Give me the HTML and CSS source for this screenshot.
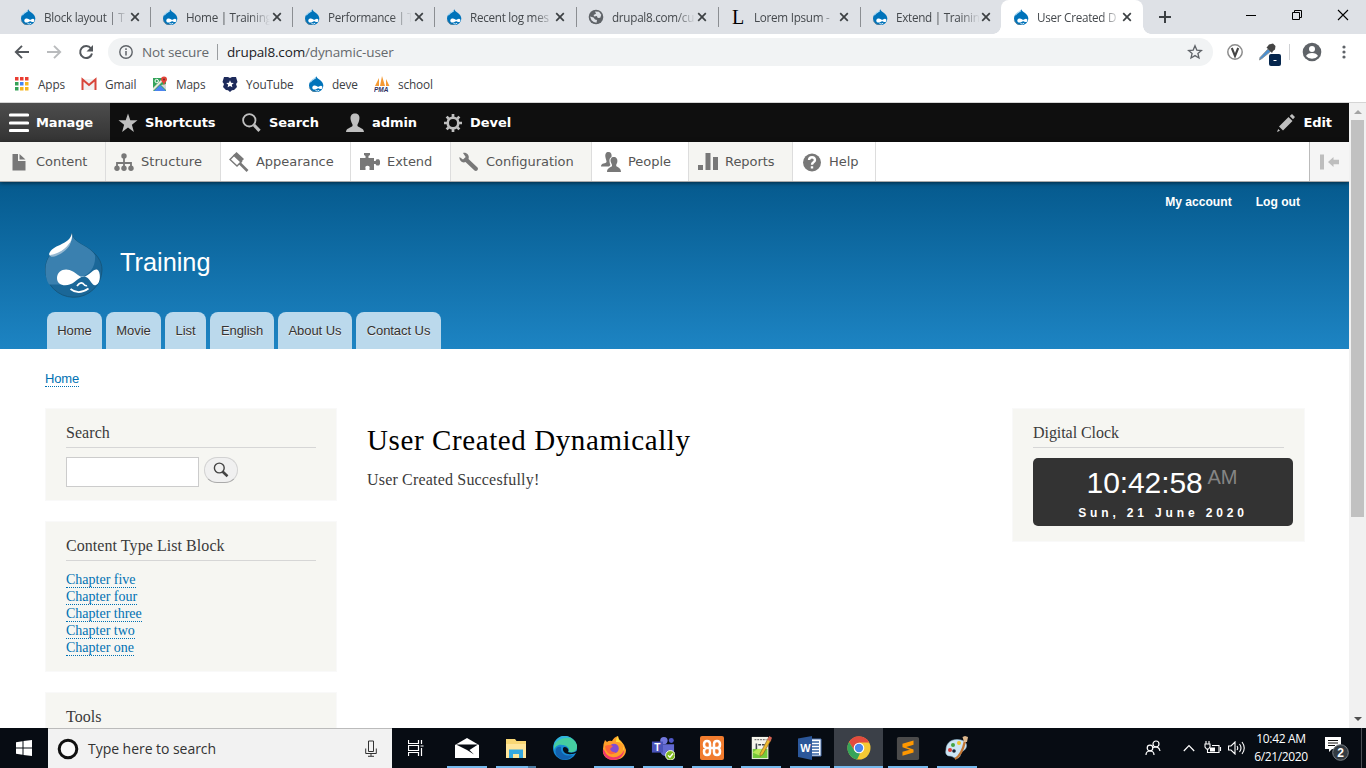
FILE: index.html
```html
<!DOCTYPE html>
<html lang="en">
<head>
<meta charset="utf-8">
<title>User Created Dynamically | Training</title>
<link rel="stylesheet" href="styles.css">
</head>
<body>
<svg class="defs" aria-hidden="true">
  <symbol id="drop" viewBox="0 0 16 16">
    <path d="M8.2.2C9 2 10.600 2.900 12 3.900c2 1.400 3.300 3.200 3.300 5.700a7 6.400 0 0 1-14.300.2C1 6.900 2.500 5 4.400 3.800 6 2.900 7.600 2 8.200.2z" fill="#0073ba"/>
    <path d="M7.700 1.600C6.500 3 3.500 3.700 2.300 6.300" stroke="#b4dcf3" stroke-width="1.300" fill="none"/>
    <path d="M4.300 11.200c.4-2 3-2.300 4.700-.9.900.7 1.400.7 2.400 0 2-1.400 3.600.2 2.800 2-.8 1.400-2.200.7-3.200.1-.9-.5-1.500-.2-2.500.5-1.900 1.300-4.500.6-4.200-1.700z" fill="#fff"/>
    <path d="M7.500 14.600q2 1 3.700-.3" stroke="#fff" stroke-width=".9" fill="none"/>
    <path d="M1.300 11.500Q3 15.800 8 15.900" stroke="#6c8490" stroke-width=".8" fill="none"/>
  </symbol>
  <symbol id="close" viewBox="0 0 10 10"><path d="M1.200 1.200l7.600 7.600M8.800 1.200L1.200 8.800" stroke="#3c4043" stroke-width="1.700"/></symbol>
</svg>

<div class="tabstrip">
  <div class="tab"><svg class="fav"><use href="#drop"/></svg><span class="t">Block layout | T</span><svg class="x"><use href="#close"/></svg></div>
  <div class="tab"><svg class="fav"><use href="#drop"/></svg><span class="t">Home | Training</span><svg class="x"><use href="#close"/></svg></div>
  <div class="tab"><svg class="fav"><use href="#drop"/></svg><span class="t">Performance | T</span><svg class="x"><use href="#close"/></svg></div>
  <div class="tab"><svg class="fav"><use href="#drop"/></svg><span class="t">Recent log mes</span><svg class="x"><use href="#close"/></svg></div>
  <div class="tab"><svg class="fav" viewBox="0 0 16 16"><circle cx="8" cy="8" r="7.300" fill="#5f6368"/><path d="M2 7.500l3.500 1 1.500 2 2 .5-.5 2.800q-3-.3-5-2.600zM7 2.500l4 .2 2.300 3-1 3-2.500.2-1-1.900-2.500.4L5.500 6 8 4.700z" fill="#dee1e6"/></svg><span class="t">drupal8.com/cu</span><svg class="x"><use href="#close"/></svg></div>
  <div class="tab"><span class="fav letter">L</span><span class="t">Lorem Ipsum -</span><svg class="x"><use href="#close"/></svg></div>
  <div class="tab last"><svg class="fav"><use href="#drop"/></svg><span class="t">Extend | Trainin</span><svg class="x"><use href="#close"/></svg></div>
  <div class="tab active"><svg class="fav"><use href="#drop"/></svg><span class="t">User Created D</span><svg class="x"><use href="#close"/></svg></div>
  <svg class="plus" viewBox="0 0 12 12"><path d="M6 0v12M0 6h12" stroke="#3c4043" stroke-width="2"/></svg>
  <div class="winbtns">
    <svg viewBox="0 0 12 12"><path d="M1 6.500h10" stroke="#000"/></svg>
    <svg viewBox="0 0 12 12"><path d="M1.500 3.500h7v7h-7zM3.500 3.500v-2h7v7h-2" stroke="#000" fill="none"/></svg>
    <svg viewBox="0 0 12 12"><path d="M1 1l10 10M11 1L1 11" stroke="#000" stroke-width="1.100"/></svg>
  </div>
</div>

<div class="addressbar">
  <svg class="nav" viewBox="0 0 16 16"><path d="M15 8H2M8 1.800L1.800 8 8 14.200" stroke="#54585d" stroke-width="1.900" fill="none"/></svg>
  <svg class="nav" viewBox="0 0 16 16"><path d="M1 8h13M8 1.800L14.200 8 8 14.200" stroke="#b9bbbd" stroke-width="1.900" fill="none"/></svg>
  <svg class="nav" viewBox="0 0 16 16"><path d="M13 4.500A6 6 0 1 0 14 9.500" stroke="#54585d" stroke-width="2" fill="none"/><path d="M15 1v6.500H8.500z" fill="#54585d"/></svg>
  <div class="omnibox">
    <svg class="info" viewBox="0 0 14 14"><circle cx="7" cy="7" r="6.200" stroke="#5f6368" stroke-width="1.400" fill="none"/><path d="M7 6v4.500M7 3.300v1.600" stroke="#5f6368" stroke-width="1.500"/></svg>
    <span class="insecure">Not secure</span><i class="bar"></i><span class="url"><b>drupal8.com</b>/dynamic-user</span>
    <svg class="star" viewBox="0 0 16 16"><path d="M8 1.800l1.800 4.300 4.600.4-3.500 3 1.100 4.500L8 11.600 4 14l1.100-4.500-3.500-3 4.600-.4z" stroke="#5f6368" stroke-width="1.300" fill="none"/></svg>
  </div>
  <svg class="vicon" viewBox="0 0 18 18"><circle cx="9" cy="9" r="7.200" stroke="#8c8c8c" stroke-width="1.500" fill="#fff"/><path d="M5.800 5L9 13l3.200-8" stroke="#444" stroke-width="2.100" fill="none"/></svg>
  <svg class="dropper" viewBox="0 0 24 24"><path d="M2 14.500L10 6l2.500 2.500-8.500 7L1.500 17z" fill="#4a90d2" stroke="#888" stroke-width=".8"/><path d="M8.500 4.500l5.500 5.500 1-2 2-1.500L17.500 3 15 .5 11 1.500 9.500 3.500z" fill="#444"/><rect x="11" y="11" width="12" height="12" rx="2" fill="#05264d"/><path d="M15.500 17.500h3" stroke="#fff"/></svg>
  <i class="vsep"></i>
  <svg class="profile" viewBox="0 0 20 20"><circle cx="10" cy="10" r="9.300" fill="#5f6368"/><circle cx="10" cy="7" r="3" fill="#fff"/><path d="M4 14q1.500-3 6-3t6 3q-2.200 2.800-6 2.800T4 14z" fill="#fff"/></svg>
  <svg class="dots" viewBox="0 0 4 14"><g fill="#5f6368"><circle cx="2" cy="2" r="1.600"/><circle cx="2" cy="7" r="1.600"/><circle cx="2" cy="12" r="1.600"/></g></svg>
</div>

<div class="bookmarks">
  <span class="bm w1"><svg viewBox="0 0 16 16"><path d="M1 1h3.500v3.500H1zM6 1h3.500v3.500H6zM11 1h3.500v3.500H11z" fill="#ea3d31"/><path d="M1 6h3.500v3.500H1z" fill="#34a157"/><path d="M6 6h3.500v3.500H6z" fill="#4285f4"/><path d="M11 6h3.500v3.500H11zM6 11h3.500v3.500H6zM11 11h3.500v3.500H11z" fill="#f6b51e"/><path d="M1 11h3.500v3.500H1z" fill="#34a157"/></svg>Apps</span>
  <span class="bm w2"><svg viewBox="0 0 16 16"><path d="M1 3h14v11H1z" fill="#f1f1f1"/><path d="M1.500 14V3.500L8 9l6.500-5.500V14" stroke="#d8453a" stroke-width="2" fill="none"/></svg>Gmail</span>
  <span class="bm w3"><svg viewBox="0 0 16 16"><path d="M1 2h13v13H1z" fill="#34a35a"/><path d="M2 15l6-6 6 6z" fill="#4b83ef"/><path d="M1 15V12L11 2h3z" fill="#e9e5da"/><path d="M9 9l5 5V8z" fill="#d3d5d8"/><circle cx="4.700" cy="5" r="1.700" stroke="#fff" stroke-width="1" fill="none"/><path d="M12 .5a3 3 0 0 1 3 3c0 2-2.500 3-3 6-.5-3-3-4-3-6a3 3 0 0 1 3-3z" fill="#e04438"/><circle cx="12" cy="3.500" r="1" fill="#7b2a24"/></svg>Maps</span>
  <span class="bm w4"><svg viewBox="0 0 16 16"><path d="M2 1h4l2 1 2-1h4l1.500 5L14 8l1 3-3 3-2 .2L8 16l-2-1.800L4 14l-3-3 1-3L.5 6z" fill="#1d2a5b"/><path d="M8 4.200l1.100 2.500 2.700.2-2 1.800.6 2.600L8 9.900l-2.400 1.400.6-2.600-2-1.800 2.700-.2z" fill="#fff"/></svg>YouTube</span>
  <span class="bm w5"><svg viewBox="0 0 16 16"><use href="#drop"/></svg>deve</span>
  <span class="bm"><svg viewBox="0 0 16 16"><path d="M1 10L5 2v8zM6 10L8 0l3 10zM12 10V3l3.500 7z" fill="#f59a33"/><text x="0" y="15.500" class="pma">PMA</text></svg>school</span>
</div>

<div class="viewport">
 <div class="page">
  <div class="toolbar">
    <span class="ti manage"><svg viewBox="0 0 20 20"><path d="M1.500 2h17M1.500 10h17M1.500 17.500h17" stroke="#fff" stroke-width="3.200" stroke-linecap="round"/></svg>Manage</span>
    <span class="ti sc"><svg viewBox="0 0 20 20"><path d="M10 .5l2.300 6.700 7.200.1-5.600 4.400 2 7.300L10 14.600 4.100 19l2-7.300L.5 7.300l7.200-.1z" fill="#bfbfbf"/></svg>Shortcuts</span>
    <span class="ti se"><svg viewBox="0 0 20 20"><circle cx="8.300" cy="7.300" r="6.200" stroke="#bfbfbf" stroke-width="1.800" fill="none"/><path d="M13 12l5.500 5.800" stroke="#bfbfbf" stroke-width="3.200"/></svg>Search</span>
    <span class="ti ad"><svg viewBox="0 0 20 20"><path d="M6 8C4.500 3 6.500.5 10 .5s5.500 2.500 4 7.500c-.5 2-2 3.500-1.500 5 1 1.700 6.500 2 6.500 6H1c0-4 5.500-4.300 6.500-6C8 11.500 6.500 10 6 8z" fill="#bfbfbf"/></svg>admin</span>
    <span class="ti"><svg viewBox="0 0 20 20"><circle cx="10" cy="10" r="5.300" stroke="#bfbfbf" stroke-width="2.600" fill="none"/><path d="M10 1v3M10 16v3M1 10h3M16 10h3M3.600 3.600l2.200 2.200M14.200 14.200l2.200 2.200M3.600 16.400l2.200-2.200M14.200 5.800l2.200-2.200" stroke="#bfbfbf" stroke-width="2.700"/></svg>Devel</span>
    <span class="ti edit"><svg viewBox="0 0 20 20"><path d="M1 19l1.200-3 1.800 1.800zM3 13.500l9.500-9.500 4 4L7 17.500zM13.700 3L16 1l3 3-2 2.300z" fill="#bfbfbf"/></svg>Edit</span>
  </div>
  <div class="tray">
    <span class="tr t-content g"><svg viewBox="0 0 20 20"><path d="M3.500 2H9v7h7.500v9.500h-13zM10.500 2l6 5.500h-6z" fill="#787878"/></svg>Content</span>
    <span class="tr t-structure g"><svg viewBox="0 0 20 20"><path d="M3 15v-4h14v4M10 4v11" stroke="#787878" stroke-width="1.800" fill="none"/><circle cx="10" cy="4" r="2.700" fill="#787878"/><g fill="#787878"><circle cx="3" cy="16.300" r="2.700"/><circle cx="10" cy="16.300" r="2.700"/><circle cx="17" cy="16.300" r="2.700"/></g></svg>Structure</span>
    <span class="tr t-appearance"><svg viewBox="0 0 20 20"><path d="M1 7.500L5.500 3l7 6.500L8 14z" fill="none" stroke="#787878" stroke-width="1.400"/><path d="M4 3.500L7.500 0l7.500 7-3.500 3.500z" fill="#787878"/><path d="M10.500 11l8 8" stroke="#787878" stroke-width="2.600"/></svg>Appearance</span>
    <span class="tr t-extend"><svg viewBox="0 0 20 20"><path d="M0 6h5.500V4L4 3V1h6v2L8.500 4v2H14v3h1.500l1-1.700H19L20 9v3l-1 1.500h-2.500l-1-1.500H14v6H9.500v-1.800q.8-2.200-2-2.400-2.800.2-2 2.400V18H0z" fill="#787878"/></svg>Extend</span>
    <span class="tr t-config g"><svg viewBox="0 0 20 20"><path d="M4 1c3-1 7 2 5.500 6l9 8.500c1.500 2-1 4.500-3 3L6.500 10C3.500 11.500 0 8.500.5 5L4 7.500 6.700 5z" fill="#787878"/></svg>Configuration</span>
    <span class="tr t-people"><svg viewBox="0 0 20 20"><path d="M4.500 5.500C3.800 2 5 0 7.500 0S11 2 10.500 5q-2.500 1-2 4.500.3 2.500 1 3.500L8 14.500H0c0-4 5-2.500 5.500-4.500.2-1.500-.7-2.500-1-4.500z" fill="#787878"/><path d="M9.800 10C9 7 10.300 5 12.800 5s4 2 3.500 5c-.3 1.700-1.500 2.500-1 4 .7 1.300 4.700 1.500 4.700 6H6c0-4.500 4.500-4.700 5-6 .4-1.500-.9-2.500-1.200-4z" fill="#787878"/></svg>People</span>
    <span class="tr t-reports g"><svg viewBox="0 0 20 20"><path d="M0 13h5v5H0zM7.500 1h5v17h-5zM15 5h5v13h-5z" fill="#787878"/></svg>Reports</span>
    <span class="tr t-help"><svg viewBox="0 0 20 20"><circle cx="10" cy="10.500" r="9" fill="#787878"/><path d="M7 8q.2-2.800 3-2.800T13 8q0 1.300-1.500 2.200T10 12.700M10 14.200v2.200" stroke="#fff" stroke-width="2.400" fill="none"/></svg>Help</span>
    <span class="toggle"><svg viewBox="0 0 20 16"><path d="M0 .5h4v15H0zM8 8l5.500-5v2.800H19v4.400h-5.500V13z" fill="#bebebe"/></svg></span>
  </div>
  <header class="header">
    <div class="usermenu"><span>My account</span><span>Log out</span></div>
    <div class="brand">
      <svg class="logo" viewBox="0 0 58 66">
        <path d="M27 .5C28 7 34 10 42 14.500 52 21 57 28 57 37a28 27.500 0 0 1-56.500-1C.5 27 6 19 14 14.500 21 10.500 26 7 27 .5z" fill="#1a6798" stroke="#15587f"/>
        <path d="M27 1c1 6 7 9 15 13.500 4 2.500 7 5.500 8 8 1 11-5 19-14 22-8 3-9 9-17 7H4C1 47 .5 42 .5 36 .5 27 6 19 14 14.500 21 10.500 26 7 27 1z" fill="#3a80af"/>
        <path d="M27 0c1 9-4 15-13 20-5 3-9 5-10 1 2-5 6-7 11-9 6-3 11-6 12-12z" fill="#fff"/><path d="M26 8c-1 7-8 12-15 15-3 1.500-6 .5-6-1 8-1 16-6 21-14z" fill="#94b8d2"/>
        <path d="M12 45c0-8 9-11 16-6.500 6 4 8 7 13 4.500 5-2.500 7-7 11-6.500 4 1.500 4 14-1 15.500-4 1.500-5-5-9-7.500s-7-.3-12 4c-7 6-18 5-18-3.500z" fill="#fff"/>
        <path d="M32 53q3-4.500 6-2.500 2.500 3 4 2M25.500 56q8 6.500 18-.5" stroke="#fff" stroke-width="1.700" fill="none"/>
      </svg>
      <span class="sitename">Training</span>
    </div>
    <nav class="menu"><span class="m1">Home</span><span class="m1">Movie</span><span class="m2">List</span><span class="m3">English</span><span class="m4">About Us</span><span class="m5">Contact Us</span></nav>
  </header>
  <div class="crumb"><a>Home</a></div>
  <div class="columns">
    <aside class="left">
      <section class="block s1"><h2>Search</h2><div class="search"><input type="text"><button><svg viewBox="0 0 16 16"><circle cx="6.300" cy="6" r="4.900" stroke="#444" stroke-width="1.400" fill="none"/><path d="M9.500 9.500l5 4.800" stroke="#444" stroke-width="2.600"/></svg></button></div></section>
      <section class="block s2"><h2>Content Type List Block</h2><ul><li><a>Chapter five</a></li><li><a>Chapter four</a></li><li><a>Chapter three</a></li><li><a>Chapter two</a></li><li><a>Chapter one</a></li></ul></section>
      <section class="block s3"><h2>Tools</h2></section>
    </aside>
    <main><h1>User Created Dynamically</h1><p>User Created Succesfully!</p></main>
    <aside class="right"><section class="block s4"><h2>Digital Clock</h2><div class="clock"><div class="time">10:42:58<span>AM</span></div><div class="date">Sun, 21 June 2020</div></div></section></aside>
  </div>
 </div>
 <div class="scrollbar"><i class="up"></i><i class="thumb"></i><i class="down"></i></div>
</div>

<div class="taskbar">
  <span class="start"><svg viewBox="0 0 16 16"><path d="M0 2.300L6.500 1.300v6.200H0zM7.500 1.100L16 0v7.500H7.500zM0 8.500h6.500v6.200L0 13.700zM7.500 8.500H16V16l-8.500-1.100z" fill="#fff"/></svg></span>
  <div class="tsearch"><svg class="ring" viewBox="0 0 22 22"><circle cx="11" cy="11" r="8.800" stroke="#111" stroke-width="3" fill="#fafafa"/></svg><span>Type here to search</span><svg class="mic" viewBox="0 0 12 17"><path d="M3.500 1h5v10.500h-5zM.7 8.500v5h10.600v-5M6 13.500V16M3 16.300h6" stroke="#333" fill="none"/></svg></div>
  <span class="tview"><svg viewBox="0 0 16 16"><path d="M.5 0v3.500h10V0M.5 16v-3.500h10V16M.5 5.500h10v5H.5zM13.500 0v4M13.500 8v8M12.500 6h3" stroke="#fff" stroke-width="1.200" fill="none"/></svg></span>
  <span class="app on"><svg viewBox="0 0 24 24"><path d="M0 9L12 2l12 7v13H0z" fill="#fff"/><path d="M1 8.500h22L14.500 14l4.500 4.500L12 14z" fill="#070c13"/></svg></span>
  <span class="app on ex"><svg viewBox="0 0 24 24"><path d="M2 3h9l1.500 2H22v17H2z" fill="#f8d775"/><path d="M2 8h20v14H2z" fill="#ffe69b"/><path d="M5 22v-8.500h14V22h-4v-4H9v4z" fill="#34a8e0"/></svg></span>
  <span class="app"><svg viewBox="0 0 24 24"><circle cx="12" cy="12" r="12" fill="#168bd5"/><path d="M1 9C3-1 20-3 24 9c1 7-5 8-9 7 3-3-1-7-6-7-4-1-7 2-8 5z" fill="#45cda0"/><path d="M1 9C3-1 13-2 18 2 10 1 4 4 1 9z" fill="#2fb5dc"/><path d="M8 11c-1 7 5 10 12 8-4 6-12 6-16 1-3-5-1-10 4-9z" fill="#1261ae"/><path d="M10 12c-1 5 5 8 13 5l1 1v-3q-5 3-9 1c2-3-3-7-5-4z" fill="#07101a"/></svg></span>
  <span class="app on"><svg viewBox="0 0 24 24"><path d="M3 4l2 2q2-2 5-1 2-4 6-5 0 3 3 5 4 4 5 9c0 6-5 10-12 10S0 20 1 13q0-5 2-9z" fill="#ff9f29"/><path d="M1 13c3 2 2 7 9 8 5 1 10-2 12-7 0 6-5 10-11 10S0 19 1 13z" fill="#f0366d"/><circle cx="12" cy="12.500" r="4.800" fill="#824ed1"/><path d="M3 10q4-2 8 0l-3 3q2 4 6 3-4 4-8 1-3-3-3-7z" fill="#ff663b"/><path d="M16 0q0 4 4 7 3 5 1 8 2-10-7-9 0-4 2-6z" fill="#ffdf3e"/></svg></span>
  <span class="app on"><svg viewBox="0 0 24 26"><circle cx="13" cy="5" r="4" fill="#7177dc"/><circle cx="21" cy="5" r="2.700" fill="#5059c9"/><path d="M9 9h15v8q-2 5-8 5-5 0-7-5z" fill="#6269d0"/><path d="M0 6h12v12H0z" fill="#4953b8"/><text x="2.600" y="16" class="glyph">T</text><circle cx="20" cy="21" r="5.200" fill="#7fba20" stroke="#fff"/><path d="M17.500 21l2 2 3.300-4" stroke="#fff" stroke-width="1.500" fill="none"/></svg></span>
  <span class="app on"><svg viewBox="0 0 24 24"><rect width="24" height="24" rx="2" fill="#f17c2e"/><path d="M10 12V8q0-3-3-3T4 8.500 7 12h10q3 0 3-3.500T17 5t-3 3v8q0 3 3 3t3-3.500-3-3.500M7 12q-3 0-3 3.500T7 19t3-3v-4" stroke="#fff" stroke-width="2.500" fill="none"/></svg></span>
  <span class="app on"><svg viewBox="0 0 24 26"><path d="M2 1h18v24H2z" fill="#f5f5ec"/><path d="M3 14h16v10H3z" fill="#74c93b"/><path d="M3 18l5-4h8l-4 8z" fill="#b9e957"/><path d="M5 4h13" stroke="#777" stroke-width="1.300" stroke-dasharray="2 1"/><path d="M7 8v6M9 9.500h3M13 9.500h3" stroke="#424950" stroke-width="1.700"/><path d="M11 19l9-17 3 2-9 16-3 2z" fill="#edba2e" stroke="#806126" stroke-width=".7"/><path d="M19 4l2-4 3 2-2 4z" fill="#d66456"/></svg></span>
  <span class="app on"><svg viewBox="0 0 24 24"><path d="M13 3h10v17H13z" fill="#fff" stroke="#4b70af"/><path d="M14 6h7M14 9h7M14 12h7M14 15h7M14 18h7" stroke="#3865a5" stroke-width="1.300"/><path d="M0 2.500L14 0v24L0 21z" fill="#2b579a"/><text x="2.200" y="16" class="glyph">W</text></svg></span>
  <span class="app on chrome"><svg viewBox="0 0 24 24"><circle cx="12" cy="12" r="11.500" fill="#f5c934"/><path d="M2 6A11.500 11.500 0 0 1 22.200 6.500H12L7 14z" fill="#e24b3e"/><path d="M2 6l6 9.500 5 2L10 23.400A11.500 11.500 0 0 1 2 6z" fill="#36a45a"/><circle cx="12" cy="12" r="5.300" fill="#fff"/><circle cx="12" cy="12" r="4.200" fill="#4a86ed"/></svg></span>
  <span class="app on"><svg viewBox="0 0 24 26"><rect y="1" width="24" height="25" rx="2" fill="#4b4b4b"/><path d="M6 8.500L18 5v4.500l-8 2.500 8 2.500V18L6 21.500V17l8-2.200-8-2.500z" fill="#ff9800"/></svg></span>
  <span class="app on"><svg viewBox="0 0 24 24"><path d="M1 14C1 6 8 2 16 4c8 2 6 9 2 11-4 1-1 5-5 7-4 1-5-2-8-2s-5-2-4-6z" fill="#cde6f4" stroke="#91b7ce" stroke-width=".6"/><circle cx="5" cy="14" r="2" fill="#da3d36"/><circle cx="8" cy="9" r="2" fill="#45a544"/><circle cx="14" cy="7" r="2" fill="#eec52f"/><circle cx="9" cy="15" r="1.800" fill="#142233"/><path d="M10 23q7-4 10-18" stroke="#c17634" stroke-width="2.300" fill="none"/><path d="M17.500 1l2.500-1 3 1-1 5h-3z" fill="#dfb88d"/></svg></span>
  <div class="systray">
    <svg class="people" viewBox="0 0 16 16"><g stroke="#fff" stroke-width="1.200" fill="none"><circle cx="11" cy="4" r="3"/><circle cx="5" cy="8" r="2.800"/><path d="M1 15q0-4 4-4t4 4M8 7.500q6-2 7 3.500"/></g></svg>
    <svg class="chev" viewBox="0 0 12 8"><path d="M.8 7L6 1.500 11.200 7" stroke="#fff" stroke-width="1.200" fill="none"/></svg>
    <svg class="batt" viewBox="0 0 18 14"><path d="M1 3h5v3l-1.500 2h-2L1 6zM2 0v3M5 0v3M3.500 8v3.500H6M8 4.500h7v7H6M16.500 6v4" stroke="#fff" stroke-width="1.100" fill="none"/><path d="M6 6.500h5v4H6z" fill="#fff"/></svg>
    <svg class="vol" viewBox="0 0 18 14"><path d="M.5 5H3l4-4v12L3 9H.5zM9 5q1.500 2 0 4M11.500 3q3 4 0 8M14 1q4.500 6 0 12" stroke="#fff" stroke-width="1.100" fill="none"/></svg>
    <div class="when"><span>10:42 AM</span><span>6/21/2020</span></div>
    <svg class="note" viewBox="0 0 25 25"><path d="M0 0h16v12H7l-3 3v-3H0z" fill="#fff"/><path d="M3 3.500h10M3 6h10M3 8.500h7" stroke="#111"/><circle cx="15.500" cy="15.500" r="7.800" fill="#333b42" stroke="#7b8187"/><text x="12.200" y="20" class="badge">2</text></svg>
    <i class="desk"></i>
  </div>
</div>
</body>
</html>
```
FILE: styles.css
```css
* { box-sizing: border-box; }
body { margin: 0; width: 1366px; height: 768px; overflow: hidden; display: flex; flex-direction: column; background: #fff; font-family: "Liberation Sans", Arial, sans-serif; white-space: nowrap; }
svg { display: block; flex: none; }
.defs { width: 0; height: 0; position: absolute; }

/* browser chrome */
.tabstrip, .addressbar, .bookmarks, .taskbar { font-family: "Open Sans", "Noto Sans", sans-serif; }
.tabstrip { height: 34px; flex: none; background: #dee1e6; display: flex; align-items: center; padding-left: 9px; }
.tab { width: 142px; height: 34px; flex: none; display: flex; align-items: center; padding-left: 11px; color: #45494d; font-size: 11.700px; letter-spacing: -.28px; background: linear-gradient(#8b8e92, #8b8e92) right 0 top 7px / 1px 20px no-repeat; }
.tab.last { background: none; width: 140px; }
.fav { width: 16px; height: 16px; flex: none; margin-right: 8px; }
.letter { font: 20px/16px "Liberation Serif", serif; color: #000; padding-left: 2px; }
.t { width: 84px; mask-image: linear-gradient(to right, #000 64px, transparent 84px); }
.x { width: 10px; height: 10px; margin-left: 2px; }
.tab:nth-child(n+4) .x { margin-left: 1px; }
.tab.active { width: 142px; background: #fff; border-radius: 8px 8px 0 0; position: relative; padding-left: 12px; }
.tab.active::before, .tab.active::after { content: ""; position: absolute; bottom: 0; width: 8px; height: 8px; }
.tab.active::before { left: -8px; background: radial-gradient(circle at 0 0, transparent 7.5px, #fff 8px); }
.tab.active::after { right: -8px; background: radial-gradient(circle at 100% 0, transparent 7.5px, #fff 8px); }
.plus { width: 12px; height: 12px; margin-left: 16px; }
.winbtns { display: flex; gap: 34px; margin: 0 17px 5px auto; }
.winbtns svg { width: 12px; height: 12px; }
.addressbar { height: 36px; flex: none; display: flex; align-items: center; padding-left: 14px; }
.nav { width: 16px; height: 16px; margin-right: 16px; }
.omnibox { width: 1105px; height: 28px; margin-left: -2px; border-radius: 14px; background: #f1f3f4; display: flex; align-items: center; padding: 0 10px 0 11px; color: #65696d; }
.info { width: 14px; height: 14px; margin-right: 9px; }
.insecure { width: 75px; letter-spacing: -.15px; font-size: 13.500px; }
.bar { width: 1px; height: 16px; background: #9a9da0; margin-right: 9px; }
.url { font-size: 13.500px; letter-spacing: -.14px; }
.url b { color: #202124; font-weight: 400; }
.star { width: 16px; height: 16px; margin-left: auto; }
.vicon { width: 18px; height: 18px; margin-left: 13px; }
.dropper { width: 24px; height: 24px; margin: 5px 0 0 14px; }
.vsep { width: 1px; height: 16px; background: #cfd1d4; margin-left: 7px; }
.profile { width: 20px; height: 20px; margin-left: 12px; }
.dots { width: 4px; height: 14px; margin-left: 20px; }
.bookmarks { height: 33px; flex: none; display: flex; align-items: center; padding: 0 0 5px 14px; border-bottom: 1px solid #d5d5d5; color: #3c4043; font-size: 11.800px; }
.bm { display: flex; align-items: center; gap: 8px; letter-spacing: -.15px; }
.bm svg { width: 16px; height: 16px; }
.w1 { width: 67px; } .w2 { width: 71px; } .w3 { width: 70px; } .w4 { width: 86px; } .w5 { width: 66px; }
.pma { font: italic bold 6.500px "Liberation Sans", sans-serif; letter-spacing: 0; fill: #2f3263; }

/* page */
.viewport { height: 625px; flex: none; display: flex; overflow: hidden; }
.page { width: 1349px; overflow: hidden; }
.toolbar { height: 39px; background: #0f0f0f; display: flex; color: #fff; font: bold 13px "DejaVu Sans", sans-serif; }
.ti { display: flex; align-items: center; gap: 7px; padding-left: 8px; letter-spacing: -.06px; }
.ti svg, .tr svg { width: 20px; height: 20px; }
.manage { width: 110px; padding-left: 9px; background: linear-gradient(#4d4d4d, #333); letter-spacing: -.15px; }
.sc { width: 123px; } .se { width: 104px; gap: 8px; } .ad { width: 98px; }
.edit { margin-left: auto; margin-right: 17px; }
.tray { height: 40px; display: flex; background: #fff; border-bottom: 1px solid #aaa; color: #565656; font: 13px "DejaVu Sans", sans-serif; position: relative; box-shadow: 0 1px 4px rgba(0,0,0,.55); }
.tr { display: flex; align-items: center; gap: 7px; padding-left: 8px; border-right: 1px solid #ddd; letter-spacing: -.04px; }
.g { background: #f5f5f2; }
.t-content { width: 106px; padding-left: 9px; }
.t-structure { width: 115px; letter-spacing: .06px; }
.t-appearance { width: 130px; }
.t-extend { width: 100px; padding-left: 9px; }
.t-config { width: 141px; }
.t-people { width: 97px; padding-left: 9px; }
.t-reports { width: 104px; padding-left: 9px; }
.t-help { width: 83px; padding-left: 9px; }
.toggle { margin-left: auto; width: 40px; border-left: 1px solid #bbb; background: #f5f5f5; display: flex; align-items: center; padding-left: 10px; }
.toggle svg { width: 20px; height: 16px; }
.header { height: 167px; background: linear-gradient(#055a8e, #1d84c3); color: #fff; display: flex; flex-direction: column; }
.usermenu { height: 39px; display: flex; justify-content: flex-end; gap: 24px; padding-right: 49px; line-height: 40px; font-weight: bold; font-size: 12.100px; }
.brand { display: flex; padding: 12px 0 0 45px; height: 91px; }
.logo { width: 58px; height: 66px; }
.sitename { margin-left: 17px; font-size: 25.300px; line-height: 59px; }
.menu { display: flex; gap: 4px; padding-left: 47px; }
.menu span { height: 37px; line-height: 37px; text-align: center; background: #bbd9ec; border-radius: 8px 8px 0 0; color: #333; font-size: 13px; text-shadow: 0 1px #eee; letter-spacing: -.06px; }
.menu .m1 { width: 55px; } .menu .m2 { width: 41px; } .menu .m3 { width: 64px; } .menu .m4 { width: 74px; } .menu .m5 { width: 85px; }
.crumb { height: 59px; padding: 22px 0 0 45px; font-size: 13px; letter-spacing: -.15px; line-height: 16px; }
a { color: #0071b3; border-bottom: 1px dotted #0071b3; }
.crumb a { display: inline-block; height: 16px; line-height: 15px; }
.columns { display: flex; font-family: "Liberation Serif", Georgia, serif; color: #3b3b3b; }
.left { width: 292px; margin-left: 45px; display: flex; flex-direction: column; gap: 20px; }
.block { background: #f6f6f2; border: 1px solid #f9f9f9; padding: 14px 20px 0; }
.s1 { height: 93px; } .s2 { height: 151px; } .s3 { height: 93px; } .s4 { height: 134px; }
h2 { margin: 0; height: 25px; border-bottom: 1px solid #d6d6d6; font-weight: 400; font-size: 16px; line-height: 19px; letter-spacing: .06px; }
.s4 h2 { letter-spacing: -.06px; }
.search { display: flex; gap: 5px; padding-top: 9px; }
input { width: 133px; height: 30px; border: 1px solid #ccc; background: #fff; padding: 0; }
button { width: 34px; height: 26px; border: 1px solid #d2d2d2; border-bottom-color: #aaa; border-radius: 13px; background: #f0f0f0; padding: 4px 8px; }
button svg { width: 16px; height: 16px; }
ul { list-style: none; margin: 0; padding: 11px 0 0; font-size: 14px; }
li { height: 17px; display: flex; }
li a { height: 16px; line-height: 15px; }
main { width: 645px; padding: 14px 0 0 30px; }
h1 { margin: 0; font-weight: 400; font-size: 29px; letter-spacing: .6px; line-height: 36px; color: #000; }
main p { margin: 12px 0 0; font-size: 16px; letter-spacing: .18px; line-height: 20px; }
.right { width: 293px; margin-left: 30px; }
.clock { width: 260px; height: 68px; margin-top: 10px; border-radius: 5px; background: #333; color: #fff; text-align: center; font-family: "Liberation Sans", Arial, sans-serif; }
.time { height: 45px; font-size: 30px; line-height: 50px; display: flex; justify-content: center; padding-right: 2px; letter-spacing: -.1px; }
.time span { margin-left: 5px; color: #858585; font-size: 20px; line-height: 38px; }
.date { font-size: 12px; font-weight: bold; letter-spacing: 3.850px; line-height: 20px; }
.scrollbar { width: 17px; background: #f1f1f1; display: flex; flex-direction: column; align-items: center; }
.up, .down { width: 0; height: 0; border: 4px solid transparent; }
.up { border-bottom-color: #a3a3a3; border-top: 0; margin: 7px 0 6px; }
.thumb { width: 13px; height: 397px; background: #c1c1c1; }
.down { border-top-color: #505050; border-bottom: 0; margin: auto 0 7px; }

/* taskbar */
.taskbar { height: 40px; flex: none; display: flex; background: #070c13; color: #fff; }
.start { width: 48px; padding: 12px 16px; }
.start svg { width: 16px; height: 16px; }
.tsearch { width: 344px; background: #f2f2f2; border-top: 1px solid #bbb; display: flex; align-items: center; padding: 0 15px 0 9px; color: #333; font-size: 14px; letter-spacing: -.04px; }
.ring { width: 22px; height: 22px; margin-right: 9px; }
.mic { width: 12px; height: 17px; margin-left: auto; }
.tview { width: 50px; padding: 12px 16px; }
.tview svg { width: 16px; height: 16px; }
.app { width: 49px; flex: none; height: 40px; display: flex; justify-content: center; align-items: center; }
.app svg { width: 24px; height: 24px; }
.on { background: linear-gradient(#76b9ed, #76b9ed) center bottom / 40px 2px no-repeat; }
.ex { background: linear-gradient(to right, #76b9ed 32px, #4c7ca2 32px) center bottom / 40px 2px no-repeat; }
.chrome { background: linear-gradient(#76b9ed, #76b9ed) center bottom / 49px 2px no-repeat #3b4048; }
.glyph { font: bold 11px "Liberation Sans", sans-serif; fill: #fff; }
.systray { display: flex; align-items: center; margin-left: auto; }
.people { width: 16px; height: 16px; }
.chev { width: 12px; height: 8px; margin-left: 22px; }
.batt { width: 18px; height: 14px; margin-left: 9px; }
.vol { width: 18px; height: 14px; margin-left: 6px; }
.when { width: 60px; margin-left: 5px; font-size: 12px; line-height: 18px; display: flex; flex-direction: column; align-items: center; letter-spacing: -.35px; }
.note { width: 25px; height: 25px; margin: 3px 0 0 14px; }
.badge { font: bold 12px "Liberation Sans", sans-serif; fill: #fff; }
.desk { width: 1px; height: 40px; margin: 0 4px 0 11px; background: #4a4e54; }
```
